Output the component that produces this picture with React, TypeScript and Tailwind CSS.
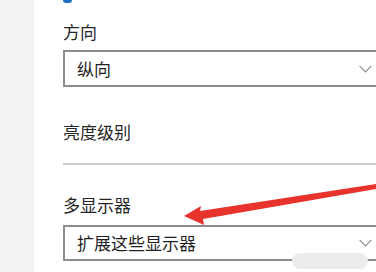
function Chevron() {
  return (
    <svg width="13" height="8" viewBox="0 0 13 8" className="shrink-0">
      <polyline points="0.6,0.8 6.5,6.8 12.4,0.8" fill="none" stroke="#8f8f8f" strokeWidth="1.2" />
    </svg>
  );
}

function Dropdown({ value, height }: { value: string; height: string }) {
  return (
    <div
      className={`flex w-[340px] shrink-0 items-center border-2 border-[#8c8c8c] bg-white pl-[12px] pr-[29px] ${height}`}
    >
      <span className="flex-1 text-[17px] leading-6 text-[#1f1f1f]">{value}</span>
      <Chevron />
    </div>
  );
}

export default function App() {
  return (
    <div
      className="relative flex h-[272px] w-[376px] overflow-hidden bg-white"
      style={{ fontFamily: '"Noto Sans CJK SC", "Noto Sans", sans-serif' }}
    >
      <div className="w-[34px] shrink-0 bg-[#f2f2f2]" />
      <div className="flex w-[369px] shrink-0 flex-col items-start pl-[29px]">
        {/* slider thumb, cut off by the top edge */}
        <div className="h-[3px] w-[9px] shrink-0 rounded-b-full bg-[#1d6ec2]" />
        <div className="mt-[17px] text-[17px] leading-6 text-[#262626]">方向</div>
        <div className="mt-[6px]">
          <Dropdown value="纵向" height="h-[37px]" />
        </div>
        <div className="mt-[33px] text-[17px] leading-6 text-[#262626]">亮度级别</div>
        <div className="mt-[19px] h-[2px] w-[340px] shrink-0 bg-[#cccccc]" />
        <div className="mt-[28px] text-[17px] leading-6 text-[#262626]">多显示器</div>
        <div className="mt-[8px]">
          <Dropdown value="扩展这些显示器" height="h-[36px]" />
        </div>
      </div>

      {/* overlays */}
      <div className="absolute left-[292px] top-[253px] h-[16px] w-[76px] rounded-full bg-[#ececec]" />
      <svg className="pointer-events-none absolute left-0 top-0" width="376" height="272" viewBox="0 0 376 272">
        <polygon
          points="184,216 201,206 200,211 376,184 376,189 203,219 204,225"
          fill="#e8322c"
        />
      </svg>
    </div>
  );
}
